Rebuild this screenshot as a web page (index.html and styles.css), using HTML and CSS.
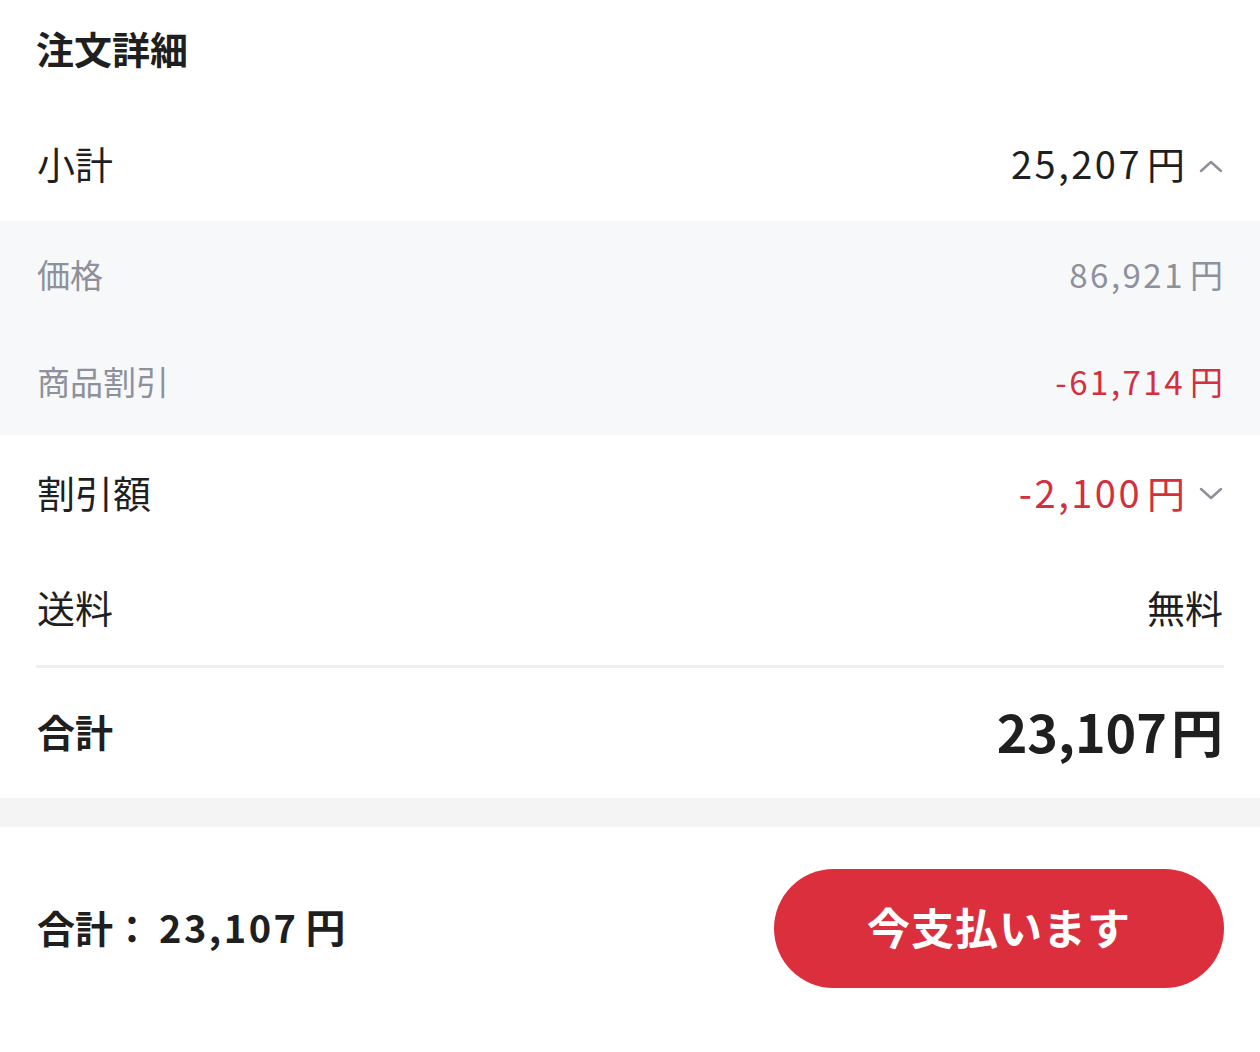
FILE: index.html
```html
<!DOCTYPE html>
<html lang="ja">
<head>
    <meta charset="UTF-8">
    <meta name="viewport" content="width=device-width, initial-scale=1.0">
    <title>注文詳細</title>
    <link rel="stylesheet" href="styles.css">
</head>
<body>

<div class="order-detail">
    <h2 class="section-title">注文詳細</h2>

    <div class="row row-subtotal">
        <span class="label">小計</span>
        <span class="value">
            <span class="num">25,207</span><span class="yen">円</span>
            <svg class="chevron" viewBox="0 0 24 14" width="24" height="14"><polyline points="2,12 12,3 22,12"/></svg>
        </span>
    </div>

    <div class="breakdown">
        <div class="row row-sub">
            <span class="label">価格</span>
            <span class="value"><span class="num">86,921</span><span class="yen">円</span></span>
        </div>
        <div class="row row-sub">
            <span class="label">商品割引</span>
            <span class="value red"><span class="num">-61,714</span><span class="yen">円</span></span>
        </div>
    </div>

    <div class="row row-discount">
        <span class="label">割引額</span>
        <span class="value red">
            <span class="num">-2,100</span><span class="yen">円</span>
            <svg class="chevron" viewBox="0 0 24 14" width="24" height="14"><polyline points="2,2 12,11 22,2"/></svg>
        </span>
    </div>

    <div class="row row-shipping">
        <span class="label">送料</span>
        <span class="value">無料</span>
    </div>

    <div class="divider"></div>

    <div class="row row-total">
        <span class="label">合計</span>
        <span class="value"><span class="num">23,107</span><span class="yen">円</span></span>
    </div>
</div>

<div class="gap"></div>

<div class="pay-bar">
    <div class="pay-total">合計：<span class="num">23,107</span><span class="yen">円</span></div>
    <button class="pay-button">今支払います</button>
</div>

</body>
</html>
```

FILE: styles.css
```css
* {
    box-sizing: border-box;
}
body {
    font-family: 'Noto Sans CJK JP', 'Noto Sans', sans-serif;
    margin: 0;
    padding: 0;
    background-color: #fff;
    color: #1f1f1f;
}
.section-title {
    margin: 0;
    padding: 23px 36px 37px;
    font-size: 38px;
    line-height: 50px;
    font-weight: 700;
}
.row {
    display: flex;
    justify-content: space-between;
    align-items: center;
    padding: 0 37px 6px;
    font-size: 38px;
}
.row-subtotal {
    height: 111px;
}
.breakdown {
    background-color: #f7f8fa;
}
.row-sub {
    height: 107px;
    padding-bottom: 2px;
    font-size: 33px;
    color: #8e909b;
}
.row-discount {
    height: 118px;
}
.row-shipping {
    height: 112px;
}
.value {
    display: flex;
    align-items: center;
}
.num {
    letter-spacing: 2.5px;
}
.yen {
    margin-left: 5px;
}
.red {
    color: #d3303d;
}
.chevron {
    margin-left: 14px;
    margin-top: 6px;
    fill: none;
    stroke: #8e909b;
    stroke-width: 2.5;
    stroke-linecap: round;
    stroke-linejoin: round;
}
.divider {
    height: 3px;
    margin: 0 36px;
    background-color: #efefef;
}
.row-total {
    height: 130px;
    font-weight: 700;
}
.row-total .value {
    font-size: 52px;
}
.row-total .num {
    letter-spacing: 0;
}
.row-total .yen {
    margin-left: 4px;
}
.gap {
    height: 29px;
    background-color: #f4f4f4;
}
.pay-bar {
    display: flex;
    justify-content: space-between;
    align-items: center;
    padding: 42px 36px 65px 37px;
}
.pay-total {
    font-size: 38px;
    font-weight: 700;
    padding-bottom: 6px;
}
.pay-total .num {
    margin-left: 8px;
}
.pay-total .yen {
    margin-left: 7px;
    font-size: 40px;
}
.pay-button {
    width: 450px;
    height: 119px;
    padding-bottom: 6px;
    border: none;
    border-radius: 60px;
    background-color: #dc2f3e;
    color: #fff;
    font-family: inherit;
    font-size: 43px;
    font-weight: 700;
    letter-spacing: 1px;
    cursor: pointer;
}
```
